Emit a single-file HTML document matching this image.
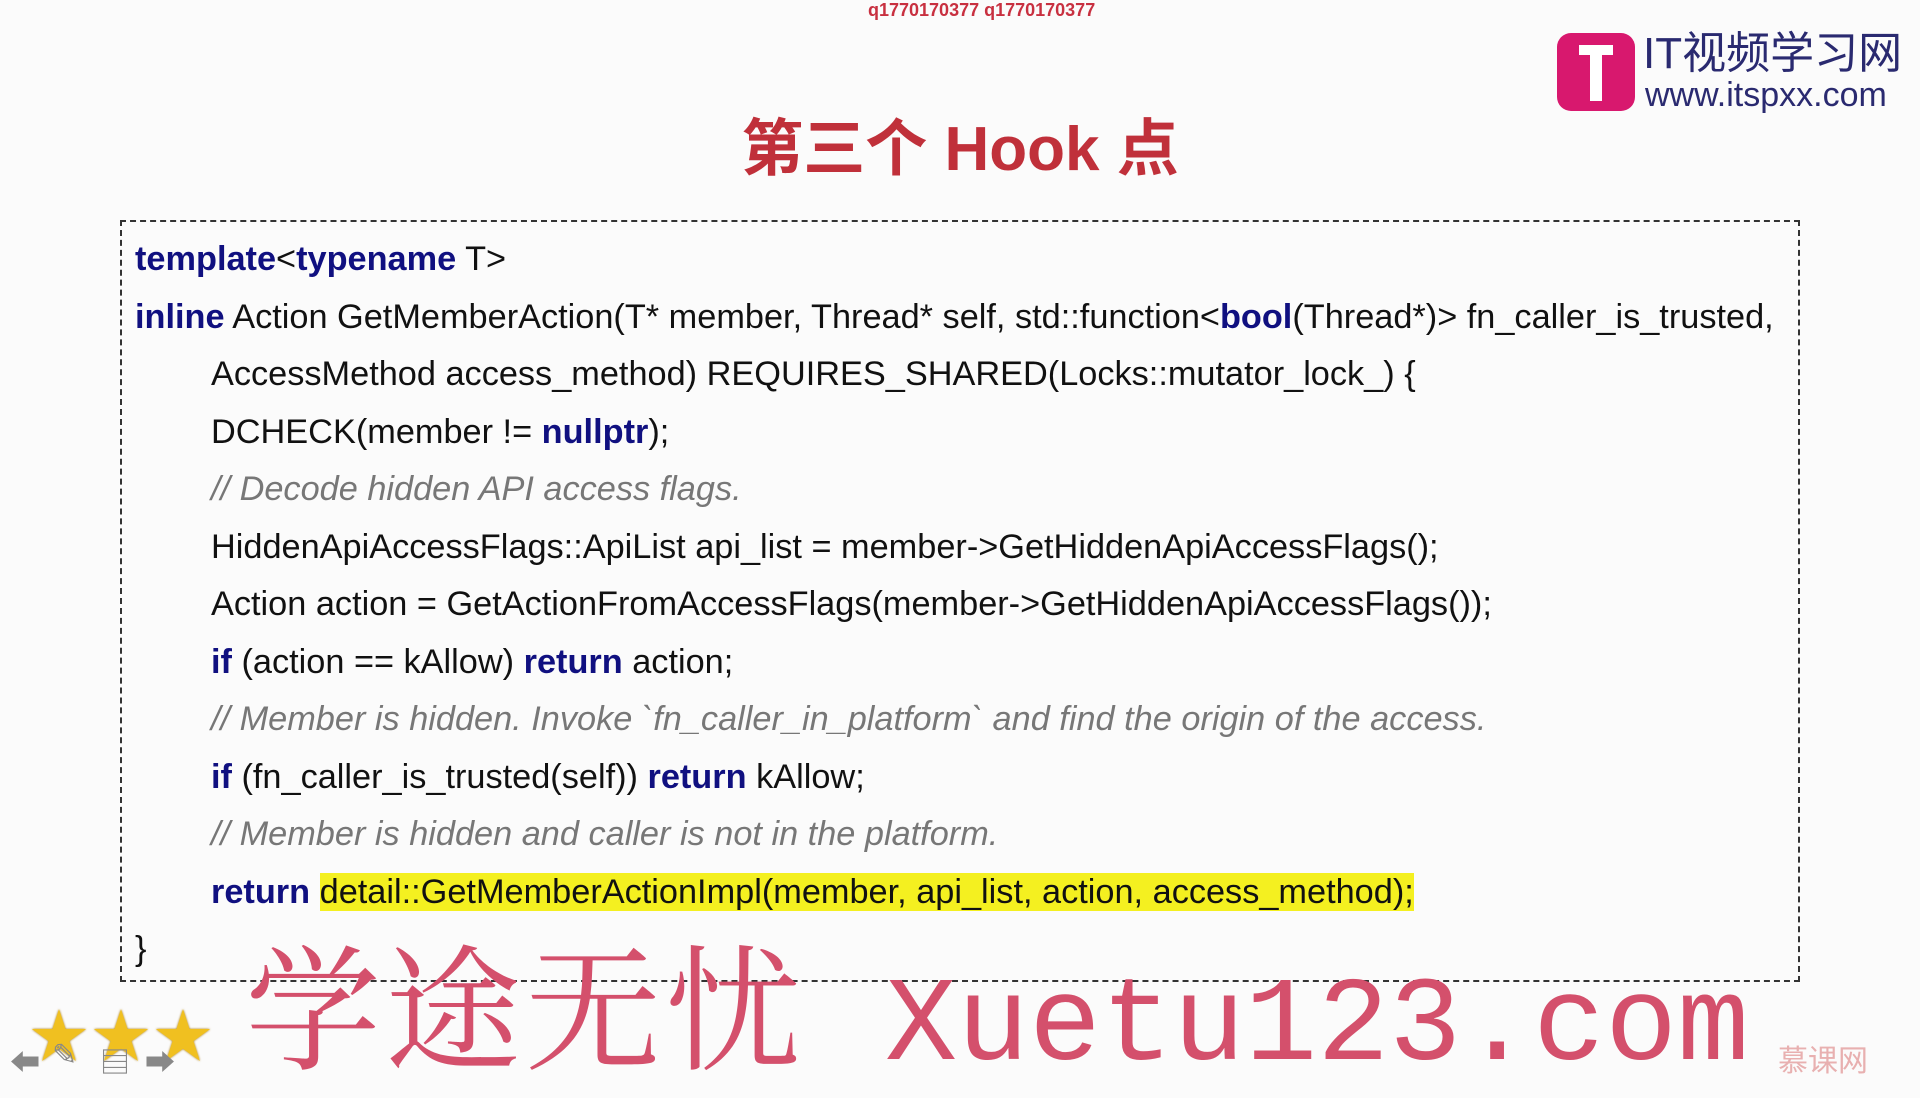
<!DOCTYPE html>
<html><head><meta charset="utf-8"><style>
body{margin:0;width:1920px;height:1080px;background:#fbfbfb;overflow:hidden;position:relative;font-family:"Liberation Sans","Noto Sans CJK SC",sans-serif}
.qq{position:absolute;top:0;left:868px;color:#c83040;font-weight:bold;font-size:18px}
.title{position:absolute;top:98px;left:0;width:1920px;text-align:center;color:#c0303a;font-weight:bold;font-size:62px}
.box{position:absolute;left:120px;top:220px;width:1680px;height:762px;border:2px dashed #333;box-sizing:border-box}
.code{position:absolute;left:135px;top:231px;font-size:34.3px;color:#111;line-height:57.5px}
.code div{height:57.5px;white-space:nowrap}
.in{padding-left:76px}
.k{color:#101080;font-weight:bold}
.c{color:#777;font-style:italic}
.hl{background:#f4f020}
.wm{position:absolute;left:245px;top:932px;color:#d4506c;white-space:nowrap;line-height:1}
.wm .zh{font-family:"Noto Serif CJK SC",serif;font-size:136px;letter-spacing:4px}
.wm .en{font-family:"Liberation Mono",monospace;font-size:120px;margin-left:80px;font-weight:300}
.logo{position:absolute;left:1557px;top:33px;width:78px;height:78px;background:#d8186e;border-radius:14px}
.logo:before{content:"";position:absolute;left:22px;top:12px;width:34px;height:10px;background:#fff}
.logo:after{content:"";position:absolute;left:33px;top:12px;width:12px;height:56px;background:#fff}
.lt{position:absolute;left:1643px;top:32px;color:#2a2a70;font-size:44px;line-height:1}
.lu{position:absolute;left:1645px;top:76px;color:#2a2a70;font-size:34px}
.star{position:absolute;top:990px;font-size:58px;color:#f0c020;text-shadow:0 0 2px #a07000}
.nav{position:absolute;top:1038px;font-size:30px;color:#888}
.mk{position:absolute;left:1778px;top:1036px;font-size:30px;color:#e8b0b0}
</style></head><body>
<div class="qq">q1770170377 q1770170377</div>
<div class="logo"></div>
<div class="lt">IT视频学习网</div>
<div class="lu">www.itspxx.com</div>
<div class="title">第三个 Hook 点</div>
<div class="box"></div>
<div class="code"><div><span class="k">template</span>&lt;<span class="k">typename</span> T&gt;</div><div><span class="k">inline</span> Action GetMemberAction(T* member, Thread* self, std::function&lt;<span class="k">bool</span>(Thread*)&gt; fn_caller_is_trusted,</div><div class="in">AccessMethod access_method) REQUIRES_SHARED(Locks::mutator_lock_) {</div><div class="in">DCHECK(member != <span class="k">nullptr</span>);</div><div class="in c">// Decode hidden API access flags.</div><div class="in">HiddenApiAccessFlags::ApiList api_list = member-&gt;GetHiddenApiAccessFlags();</div><div class="in">Action action = GetActionFromAccessFlags(member-&gt;GetHiddenApiAccessFlags());</div><div class="in"><span class="k">if</span> (action == kAllow) <span class="k">return</span> action;</div><div class="in c">// Member is hidden. Invoke `fn_caller_in_platform` and find the origin of the access.</div><div class="in"><span class="k">if</span> (fn_caller_is_trusted(self)) <span class="k">return</span> kAllow;</div><div class="in c">// Member is hidden and caller is not in the platform.</div><div class="in"><span class="k">return</span> <span class="hl">detail::GetMemberActionImpl(member, api_list, action, access_method);</span></div><div>}</div></div>
<div class="wm"><span class="zh">学途无忧</span><span class="en">Xuetu123.com</span></div>
<div class="star" style="left:30px">★</div>
<div class="star" style="left:92px">★</div>
<div class="star" style="left:154px">★</div>
<div class="nav" style="left:10px">⬅</div>
<div class="nav" style="left:52px">✎</div>
<div class="nav" style="left:100px">▤</div>
<div class="nav" style="left:145px">➡</div>
<div class="mk">慕课网</div>
</body></html>
